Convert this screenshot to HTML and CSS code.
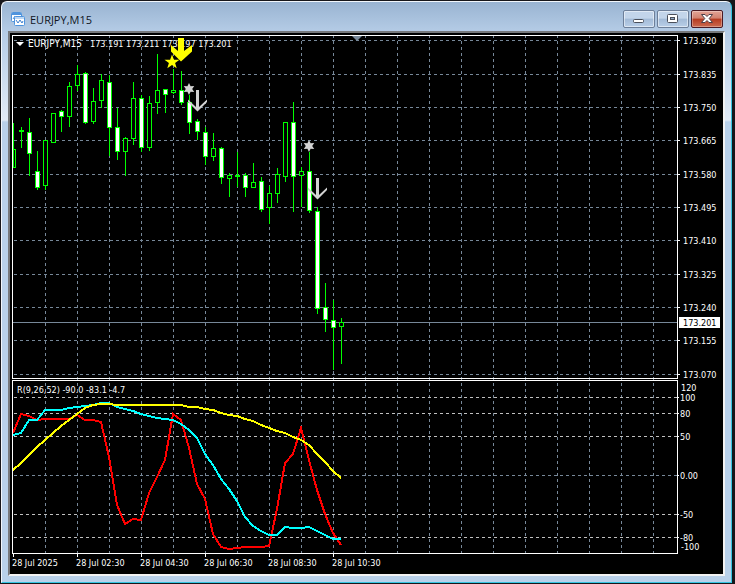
FILE: index.html
```html
<!DOCTYPE html>
<html lang="en">
<head>
    <meta charset="UTF-8">
    <meta name="viewport" content="width=device-width, initial-scale=1.0">
    <title>EURJPY,M15</title>
    <link rel="stylesheet" href="styles.css">
</head>
<body>
    <div class="window">
        <div class="titlebar">
            <svg class="logo" width="14" height="14" viewBox="0 0 14 14">
                <rect x="0.5" y="0.5" width="10" height="9" rx="1" fill="#fff" stroke="#4f94dd"/>
                <path d="M1 2h9" stroke="#4f94dd" stroke-width="2"/>
                <path d="M2 7l2-3 1 3 1-2" fill="none" stroke="#4f94dd"/>
                <rect x="3.5" y="4.5" width="10" height="9" rx="1" fill="#fff" stroke="#4f94dd"/>
                <path d="M4 6h9" stroke="#78aee8"/>
                <path d="M5 8l2 3 2-3 2 3 1-2" fill="none" stroke="#3b7fd0"/>
            </svg>
            <h1>EURJPY,M15</h1>
            <div class="buttons">
                <button type="button" aria-label="Minimize">
                    <svg width="12" height="10" viewBox="0 0 12 10">
                        <rect x="0.5" y="5.5" width="10" height="3" rx="1" fill="#fff" stroke="#4a4f5a"/>
                    </svg>
                </button>
                <button type="button" aria-label="Maximize">
                    <svg width="12" height="10" viewBox="0 0 12 10">
                        <rect x="0.5" y="0.5" width="10" height="8" rx="1" fill="#fff" stroke="#4a4f5a"/>
                        <rect x="3.5" y="3.5" width="4" height="2" fill="#93a9c6" stroke="#4a4f5a"/>
                    </svg>
                </button>
                <button type="button" class="close" aria-label="Close">
                    <svg width="12" height="10" viewBox="0 0 12 10">
                        <path d="M.5 .5h3.500L6 2.500 8 .5h3.500L8.200 4.500l3.300 4H8L6 6.500l-2 2H.5l3.300-4z" fill="#fff" stroke="#4c3f48"/>
                    </svg>
                </button>
            </div>
        </div>
        <div class="panel">
            <svg id="chart" class="chart" viewBox="10 33 713 541" role="img" aria-label="EURJPY,M15 chart"></svg>
        </div>
    </div>
    <script src="chart.js"></script>
</body>
</html>
```
FILE: styles.css
```css
body {
    margin: 0;
    padding: 1px 3px 1px 1px;
    background-color: #17171b;
    font-family: "DejaVu Sans Condensed", "DejaVu Sans", sans-serif;
}
.window {
    padding: 0 6px 6px;
    border: 1px solid #f2f7fc;
    border-right-color: #35c5e2;
    border-bottom-color: #35c5e2;
    border-radius: 6px 6px 0 0;
    background: linear-gradient(#99b4d2, #b5cce6 30px, #e2ebf6 118px, #b9d1ea 120px);
}
.titlebar {
    display: flex;
    align-items: center;
    height: 29px;
    padding: 0 2px 0 3px;
}
.logo {
    margin-top: 4px;
}
h1 {
    flex: 1;
    margin: 6px 0 0 5px;
    font-family: "Open Sans", "Noto Sans", sans-serif;
    font-size: 11px;
    font-weight: normal;
    line-height: 16px;
    color: #10161f;
}
.buttons {
    display: flex;
    gap: 2px;
    margin-top: 5px;
}
button {
    display: flex;
    justify-content: center;
    align-items: center;
    width: 32px;
    height: 18px;
    padding: 0;
    border: 1px solid #6d7f99;
    border-radius: 2px;
    background: linear-gradient(#c3d5ea 45%, #a3bbd7 50%, #b9cfe8);
    box-shadow: inset 0 0 0 1px rgba(255, 255, 255, 0.5);
    cursor: pointer;
}
.close {
    border-color: #4c1a24;
    background: linear-gradient(#e3a497, #d2816f 45%, #b63a20 50%, #cb6a50);
    box-shadow: inset 0 0 0 1px rgba(255, 255, 255, 0.3);
}
.panel {
    border: 2px solid #f3f3f3;
    border-top-color: #77797c;
    border-left-color: #77797c;
    background-color: black;
}
.chart {
    display: block;
    width: 100%;
    height: auto;
    font-size: 9px;
}
.chart text {
    fill: white;
}
.chart .symbol {
    font-size: 10px;
}
.chart .price {
    fill: black;
}
.grid, .frame, .candles, .lines {
    shape-rendering: crispEdges;
    fill: none;
}
.grid {
    stroke: #778899;
    stroke-dasharray: 3 3;
}
.level {
    stroke: #c0c0c0;
}
.frame {
    stroke: white;
}
.candles {
    stroke: #00ff00;
}
.lines {
    stroke-width: 2;
}
```
FILE: chart.js
```js
const chart = document.getElementById("chart");

// high, low, body top, body bottom, 1 = bearish
const candles = [
    [123, 149, 149, 167, 0], [127, 147, 130, 131, 0], [118, 175, 132, 153, 1], [151, 189, 171, 187, 1],
    [140, 189, 140, 185, 0], [113, 142, 113, 142, 0], [110, 131, 111, 116, 1], [82, 126, 86, 116, 0],
    [65, 90, 74, 85, 0], [72, 123, 73, 122, 1], [88, 123, 101, 121, 0], [74, 107, 80, 100, 0],
    [75, 155, 82, 127, 1], [108, 159, 127, 151, 1], [137, 175, 138, 151, 0], [82, 144, 98, 138, 0],
    [95, 151, 98, 147, 1], [96, 150, 103, 147, 0], [54, 113, 90, 102, 0], [89, 112, 89, 94, 1],
    [69, 93, 90, 92, 0], [71, 104, 90, 102, 1], [95, 133, 102, 122, 1], [119, 139, 121, 131, 1],
    [127, 164, 132, 156, 1], [133, 160, 148, 156, 0], [147, 183, 148, 177, 1], [173, 196, 175, 178, 0],
    [152, 186, 175, 176, 0], [173, 196, 175, 187, 1], [163, 187, 182, 187, 0], [177, 211, 181, 209, 1],
    [186, 223, 193, 207, 0], [168, 202, 174, 193, 0], [122, 181, 122, 176, 0], [102, 211, 122, 176, 1],
    [167, 206, 171, 175, 0], [152, 212, 171, 210, 1], [207, 313, 211, 308, 1], [283, 331, 307, 319, 1],
    [300, 369, 320, 327, 1], [318, 363, 322, 326, 0]
];

// indicator values, one per bar
const red = [433, 414, 416, 420, 419, 419, 419, 419, 415, 420, 420, 422, 457, 505, 524, 519, 520, 493, 477, 460, 414, 420, 448, 484, 499, 534, 547, 549, 548, 547, 547, 547, 546, 509, 463, 454, 428, 460, 490, 514, 533, 545];
const cyan = [435, 433, 420, 420, 410, 410, 410, 408, 407, 406, 405, 403, 403, 407, 409, 411, 414, 416, 418, 419, 420, 424, 430, 438, 454, 465, 479, 489, 501, 517, 526, 531, 535, 535, 527, 528, 528, 527, 531, 535, 539, 539];
const yellow = [470, 463, 455, 447, 440, 433, 426, 420, 414, 408, 405, 404, 404, 405, 405, 405, 405, 405, 405, 405, 405, 405, 407, 407, 409, 410, 413, 415, 416, 419, 421, 425, 428, 431, 433, 437, 440, 445, 454, 462, 471, 478];

const prices = [
    [40, "173.920"], [74, "173.835"], [107, "173.750"], [140, "173.665"], [174, "173.580"], [207, "173.495"],
    [240, "173.410"], [274, "173.325"], [307, "173.240"], [340, "173.155"], [374, "173.070"]
];
const levels = [[397, "100"], [413, "80"], [436, "50"], [475, "0.00"], [514, "-50"], [537, "-80"]];
const times = ["28 Jul 2025", "28 Jul 02:30", "28 Jul 04:30", "28 Jul 06:30", "28 Jul 08:30", "28 Jul 10:30"];

function text(x, y, value, cls) {
    return `<text x="${x}" y="${y}" class="${cls || "label"}">${value}</text>`;
}

function line(values, color) {
    const points = values.map((y, i) => `${13 + i * 8},${y}`).join(" ");
    return `<polyline points="${points}" stroke="${color}"/>`;
}

let grid = "";
let ticks = "";
let labels = "";

for (let x = 45; x < 677; x += 32) {
    grid += `<path d="M${x}.5 35V553"/>`;
}
prices.forEach(([y, value]) => {
    grid += `<path d="M14 ${y}.5H677"/>`;
    ticks += `M677 ${y}.5h3`;
    labels += text(683, y + 4, value);
});
levels.forEach(([y, value]) => {
    grid += `<path class="${value === "0.00" ? "zero" : "level"}" d="M14 ${y}.5H677"/>`;
    ticks += `M677 ${y}.5h2`;
    labels += text(680, y + 4, value);
});
labels += text(681, 391, "120") + text(681, 550, "-100");
times.forEach((value, i) => {
    ticks += `M${13 + i * 64}.5 553v4`;
    labels += text(12 + i * 64, 566, value);
});

const bars = candles.map(([high, low, top, bottom, bear], i) => {
    const x = 13 + i * 8;
    const left = i ? x - 2 : x;
    const fill = bear ? "white" : "black";
    return `<path d="M${x}.5 ${high}V${low + 1}"/>` +
        `<rect x="${left}.5" y="${top}.5" width="${x + 2 - left}" height="${bottom - top}" fill="${fill}"/>`;
}).join("");

chart.innerHTML = `
    <g class="grid">${grid}</g>
    <path d="M13 322.5H677" stroke="#778899"/>
    <g class="candles">${bars}</g>
    <g class="lines">${line(red, "#ff0000")}${line(cyan, "#00ffff")}${line(yellow, "#ffff00")}</g>
    <path class="frame" d="M12.5 35.5H677.5V378.5H12.500zM12.500 380.5H677.5V553.5H12.500z${ticks}"/>
    <path d="M352 36h10l-5 5z" fill="#778899"/>
    <path d="M16 42h8l-4 4z" fill="white"/>
    ${text(28, 47, "EURJPY,M15", "symbol")}
    ${text(90, 47, "173.191 173.211 173.197 173.201")}
    ${text(17, 393, "R(9,26,52) -90.0 -83.1 -4.7")}
    ${labels}
    <rect x="679" y="317" width="41" height="11" fill="white"/>
    ${text(683, 326, "173.201", "price")}
    <path d="M172 54.500l1.900 5.200h5.600l-4.400 3.300 1.600 5.300-4.700-3.200-4.700 3.200 1.600-5.300-4.400-3.300h5.600z" fill="yellow"/>
    <path d="M178 38h6v13l8-6v6.500L181 61.500 171 51.500v-6.500l7 6z" fill="yellow"/>
    <defs>
        <path id="star" d="M0-6L1.600-2.800 5.200-3 3.200 0 5.200 3 1.600 2.800 0 6-1.600 2.800-5.200 3-3.200 0-5.200-3-1.600-2.800z"/>
        <path id="arrow" d="M-1.500 0h3v17l8-7.500v2.500L0 21.500-9.500 12V9.500l8 7.500z"/>
    </defs>
    <g fill="#d3d3d3">
        <use href="#star" x="189" y="89"/>
        <use href="#arrow" x="197.500" y="90"/>
        <use href="#star" x="309" y="146"/>
        <use href="#arrow" x="317.500" y="178"/>
    </g>
`;
```
